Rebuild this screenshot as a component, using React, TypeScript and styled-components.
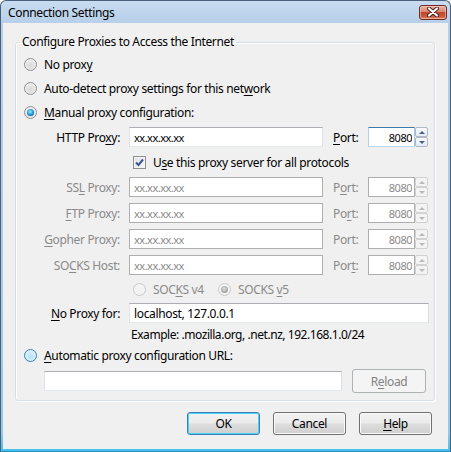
import * as React from 'react';
import styled, { createGlobalStyle } from 'styled-components';

const GlobalStyle = createGlobalStyle`
    html, body {
        margin: 0;
        padding: 0;
        background: #ffffff;
    }
    body {
        font-family: "Noto Sans", "DejaVu Sans", sans-serif;
        font-size: 12px;
        letter-spacing: -0.35px;
        color: #000;
    }
`;

const Window = styled.div`
    width: 451px;
    height: 452px;
    box-sizing: border-box;
    display: flex;
    flex-direction: column;
    border: 1px solid #4d6079;
    border-bottom-color: #1f8fc9;
    border-radius: 6px 6px 0 0;
    padding: 0 2px 2px 2px;
    overflow: hidden;
    background: linear-gradient(#c8dcf1 0px, #b7cfe9 22px, #adcbe8 60%, #8fcaeb 96%, #45c1ec 100%);
`;

const TitleBar = styled.div`
    height: 22px;
    display: flex;
    align-items: center;
    justify-content: space-between;
    padding-left: 5px;
`;

const TitleText = styled.span`
    font-size: 12px;
    color: #000;
`;

const CloseButton = styled.div`
    width: 28px;
    height: 15px;
    box-sizing: border-box;
    margin-right: 1px;
    border: 1px solid #6b2b20;
    border-radius: 3px;
    display: flex;
    align-items: center;
    justify-content: center;
    background: linear-gradient(#eab1a3 0%, #d98771 45%, #c2472b 50%, #c8583c 80%, #dd8a6e 100%);
    box-shadow: inset 0 0 0 1px rgba(255, 220, 210, 0.5);
`;

const Client = styled.div`
    flex: 1;
    background: #f0f0f0;
    display: flex;
    flex-direction: column;
    padding: 11px 13px 0 12px;
`;

const GroupBox = styled.fieldset`
    margin: 0;
    padding: 0;
    min-width: 0;
    border: 1px solid #d5dfe5;
    border-radius: 3px;
    box-shadow: inset 1px 1px 0 #ffffff, 1px 1px 0 #ffffff;
`;

const Legend = styled.legend`
    margin-left: 4px;
    padding: 0 2px;
    line-height: 16px;
    font-size: 12px;
`;

const GroupBody = styled.div`
    display: flex;
    flex-direction: column;
    padding: 2px 0 7px 8px;
`;

const RadioRow = styled.label<{ $disabled?: boolean }>`
    height: 24px;
    display: flex;
    align-items: center;
    gap: 7px;
    color: ${(props) => (props.$disabled ? '#8a8a8a' : '#000')};
`;

const Caption = styled.span`
    white-space: nowrap;
`;

const RadioDot = styled.span<{ $checked?: boolean; $disabled?: boolean; $hover?: boolean }>`
    position: relative;
    flex: none;
    width: 13px;
    height: 13px;
    box-sizing: border-box;
    border-radius: 50%;
    border: 1px solid ${(props) => (props.$hover ? '#3c7fb1' : props.$disabled ? '#c9c9c9' : '#8e8f8f')};
    background: ${(props) =>
        props.$hover
            ? 'radial-gradient(circle at 50% 60%, #b6e3fb 0%, #d6effc 60%, #eaf7fe 100%)'
            : props.$disabled
            ? 'radial-gradient(circle at 50% 60%, #f1f1f1 0%, #f6f6f6 100%)'
            : 'radial-gradient(circle at 50% 60%, #d8d8d8 0%, #e9e9e9 55%, #f8f8f8 100%)'};

    &::after {
        content: '';
        display: ${(props) => (props.$checked ? 'block' : 'none')};
        position: absolute;
        top: 2px;
        left: 2px;
        width: 7px;
        height: 7px;
        border-radius: 50%;
        background: ${(props) =>
            props.$disabled
                ? 'radial-gradient(circle at 45% 40%, #e0e0e0 0%, #a9a9a9 60%, #8f8f8f 100%)'
                : 'radial-gradient(circle at 45% 40%, #a6ecff 0%, #2aa5e2 45%, #0d5a9c 80%, #0a3c72 100%)'};
    }
`;

const AccessKey = styled.span`
    text-decoration: underline;
    text-underline-offset: 2px;
`;

const ProxyGrid = styled.div`
    margin-top: 3px;
    display: grid;
    grid-template-columns: 105px 204px 35px 60px;
    row-gap: 6px;
    align-items: center;
`;

const FieldLabel = styled.label<{ $disabled?: boolean; $align?: 'left' | 'right' }>`
    text-align: ${(props) => props.$align ?? 'right'};
    padding-right: ${(props) => (props.$align === 'left' ? '0' : '9px')};
    white-space: nowrap;
    color: ${(props) => (props.$disabled ? '#8a8a8a' : '#000')};
`;

const TextBox = styled.input<{ $width: number; $focused?: boolean; $right?: boolean }>`
    width: ${(props) => props.$width}px;
    height: 20px;
    box-sizing: border-box;
    margin: 0;
    padding: 0 ${(props) => (props.$right ? '2px' : '4px')} 0 4px;
    font-family: "Noto Sans", "DejaVu Sans", sans-serif;
    font-size: 11px;
    letter-spacing: -0.5px;
    text-align: ${(props) => (props.$right ? 'right' : 'left')};
    color: #000;
    background: #ffffff;
    outline: none;
    border: 1px solid;
    border-color: ${(props) =>
        props.$focused ? '#3d7bad #a4c9e3 #b7d9ed #b5cfe7' : '#abadb3 #dbdfe6 #e3e9ef #e2e3ea'};
    border-radius: 0;

    &:disabled {
        color: #8a8a8a;
        border-color: #aeaeae;
        background: #ffffff;
    }
`;

const PlainTextBox = styled(TextBox)`
    font-size: 12px;
    letter-spacing: -0.35px;
`;

const SpinBox = styled.div`
    display: flex;
    align-items: center;
`;

const Spinner = styled.div`
    width: 13px;
    height: 20px;
    display: flex;
    flex-direction: column;
`;

const SpinHalf = styled.div<{ $disabled?: boolean }>`
    flex: 1;
    box-sizing: border-box;
    border: 1px solid ${(props) => (props.$disabled ? '#d2d2d2' : '#b0b8c5')};
    border-radius: 2px;
    display: flex;
    align-items: center;
    justify-content: center;
    background: ${(props) =>
        props.$disabled ? '#f4f4f4' : 'linear-gradient(#fafbfd, #e4eaf3)'};
`;

const Arrow = styled.span<{ $down?: boolean; $disabled?: boolean }>`
    width: 0;
    height: 0;
    border-left: 3px solid transparent;
    border-right: 3px solid transparent;
    ${(props) => (props.$down ? 'border-top' : 'border-bottom')}: 3px solid
        ${(props) => (props.$disabled ? '#b9b9b9' : '#4a5f86')};
`;

const CheckRow = styled.label`
    grid-column: 2 / 5;
    height: 18px;
    display: flex;
    align-items: center;
    gap: 7px;
    padding-left: 4px;
`;

const CheckBox = styled.span`
    flex: none;
    width: 13px;
    height: 13px;
    box-sizing: border-box;
    border: 1px solid #8e8f8f;
    display: flex;
    align-items: center;
    justify-content: center;
    background: linear-gradient(135deg, #e2e2e2, #f7f7f7);
    box-shadow: inset 0 0 0 1px #f4f4f4;
`;

const SocksRow = styled.div`
    grid-column: 2 / 5;
    height: 16px;
    display: flex;
    align-items: center;
    padding-left: 4px;
    color: #8a8a8a;
`;

const SocksOption = styled.label<{ $width: number }>`
    width: ${(props) => props.$width}px;
    display: flex;
    align-items: center;
    gap: 7px;
`;

const NoProxyCell = styled.div`
    grid-column: 2 / 5;
`;

const Hint = styled.div`
    margin-top: 4px;
    height: 16px;
    line-height: 16px;
    padding-left: 107px;
    letter-spacing: -0.45px;
`;

const UrlRow = styled.div`
    margin-top: 2px;
    height: 24px;
    display: flex;
    align-items: center;
    gap: 10px;
    padding-left: 20px;
`;

const PushButton = styled.button<{ $default?: boolean; $width: number; $height?: number }>`
    width: ${(props) => props.$width}px;
    height: ${(props) => props.$height ?? 23}px;
    margin: 0;
    padding: 0;
    font-family: "Noto Sans", "DejaVu Sans", sans-serif;
    font-size: 12px;
    letter-spacing: -0.35px;
    color: #000;
    border-radius: 3px;
    border: 1px solid ${(props) => (props.$default ? '#3c7fb1' : '#707070')};
    background: linear-gradient(#f2f2f2 0%, #ebebeb 48%, #dddddd 52%, #cfcfcf 100%);
    box-shadow: inset 0 0 0 1px ${(props) => (props.$default ? '#48d2f7' : '#fbfbfb')};

    &:disabled {
        color: #838383;
        border-color: #adb2b5;
        background: #f4f4f4;
        box-shadow: none;
    }
`;

const ButtonRow = styled.div`
    margin-top: 11px;
    display: flex;
    justify-content: flex-end;
    gap: 13px;
    padding-right: 3px;
`;

type Row = { label: React.ReactNode; port: React.ReactNode; disabled?: boolean; focused?: boolean };

const PortSpin = ({ disabled, focused }: { disabled?: boolean; focused?: boolean }) => (
    <SpinBox>
        <TextBox $width={47} $right $focused={focused} disabled={disabled} readOnly value="8080" />
        <Spinner>
            <SpinHalf $disabled={disabled}><Arrow $disabled={disabled} /></SpinHalf>
            <SpinHalf $disabled={disabled}><Arrow $down $disabled={disabled} /></SpinHalf>
        </Spinner>
    </SpinBox>
);

const CloseGlyph = () => (
    <svg width="14" height="10" viewBox="0 0 14 10">
        <path d="M3 1.5 L11 8.5 M11 1.5 L3 8.5" stroke="#4a1a12" strokeWidth="4" strokeLinecap="round" />
        <path d="M3 1.5 L11 8.5 M11 1.5 L3 8.5" stroke="#ffffff" strokeWidth="2.2" strokeLinecap="round" />
    </svg>
);

const CheckMark = () => (
    <svg width="9" height="9" viewBox="0 0 9 9">
        <path d="M1 4.5 L3.5 7 L8 1.5" fill="none" stroke="#3d5593" strokeWidth="2" />
    </svg>
);

export const App = () => {
    const rows: Row[] = [
        { label: <>HTTP Pro<AccessKey>x</AccessKey>y:</>, port: <><AccessKey>P</AccessKey>ort:</>, focused: true },
        { label: <>SS<AccessKey>L</AccessKey> Proxy:</>, port: <>P<AccessKey>o</AccessKey>rt:</>, disabled: true },
        { label: <><AccessKey>F</AccessKey>TP Proxy:</>, port: <>Po<AccessKey>r</AccessKey>t:</>, disabled: true },
        { label: <><AccessKey>G</AccessKey>opher Proxy:</>, port: <>Port:</>, disabled: true },
        { label: <>SO<AccessKey>C</AccessKey>KS Host:</>, port: <>Por<AccessKey>t</AccessKey>:</>, disabled: true },
    ];

    const renderRow = (row: Row, key: number) => (
        <React.Fragment key={key}>
            <FieldLabel $disabled={row.disabled}>{row.label}</FieldLabel>
            <TextBox $width={194} disabled={row.disabled} readOnly value="xx.xx.xx.xx" />
            <FieldLabel $align="left" $disabled={row.disabled}>{row.port}</FieldLabel>
            <PortSpin disabled={row.disabled} focused={row.focused} />
        </React.Fragment>
    );

    return (
        <Window>
            <GlobalStyle />
            <TitleBar>
                <TitleText>Connection Settings</TitleText>
                <CloseButton><CloseGlyph /></CloseButton>
            </TitleBar>
            <Client>
                <GroupBox>
                    <Legend>Configure Proxies to Access the Internet</Legend>
                    <GroupBody>
                        <RadioRow>
                            <RadioDot />
                            <Caption>No prox<AccessKey>y</AccessKey></Caption>
                        </RadioRow>
                        <RadioRow>
                            <RadioDot />
                            <Caption>Auto-detect proxy settings for this net<AccessKey>w</AccessKey>ork</Caption>
                        </RadioRow>
                        <RadioRow>
                            <RadioDot $checked />
                            <Caption><AccessKey>M</AccessKey>anual proxy configuration:</Caption>
                        </RadioRow>
                        <ProxyGrid>
                            {renderRow(rows[0], 0)}
                            <div />
                            <CheckRow>
                                <CheckBox><CheckMark /></CheckBox>
                                <Caption>U<AccessKey>s</AccessKey>e this proxy server for all protocols</Caption>
                            </CheckRow>
                            {rows.slice(1).map((row, i) => renderRow(row, i + 1))}
                            <div />
                            <SocksRow>
                                <SocksOption $width={85}>
                                    <RadioDot $disabled />
                                    <Caption>SOC<AccessKey>K</AccessKey>S v4</Caption>
                                </SocksOption>
                                <SocksOption $width={90}>
                                    <RadioDot $disabled $checked />
                                    <Caption>SOCKS <AccessKey>v</AccessKey>5</Caption>
                                </SocksOption>
                            </SocksRow>
                            <FieldLabel><AccessKey>N</AccessKey>o Proxy for:</FieldLabel>
                            <NoProxyCell>
                                <PlainTextBox $width={300} readOnly value="localhost, 127.0.0.1" />
                            </NoProxyCell>
                        </ProxyGrid>
                        <Hint>Example: .mozilla.org, .net.nz, 192.168.1.0/24</Hint>
                        <RadioRow>
                            <RadioDot $hover />
                            <Caption><AccessKey>A</AccessKey>utomatic proxy configuration URL:</Caption>
                        </RadioRow>
                        <UrlRow>
                            <PlainTextBox $width={298} readOnly value="" />
                            <PushButton $width={74} $height={24} disabled>R<AccessKey>e</AccessKey>load</PushButton>
                        </UrlRow>
                    </GroupBody>
                </GroupBox>
                <ButtonRow>
                    <PushButton $width={73} $default>OK</PushButton>
                    <PushButton $width={73}>Cancel</PushButton>
                    <PushButton $width={73}><AccessKey>H</AccessKey>elp</PushButton>
                </ButtonRow>
            </Client>
        </Window>
    );
};

export default App;
